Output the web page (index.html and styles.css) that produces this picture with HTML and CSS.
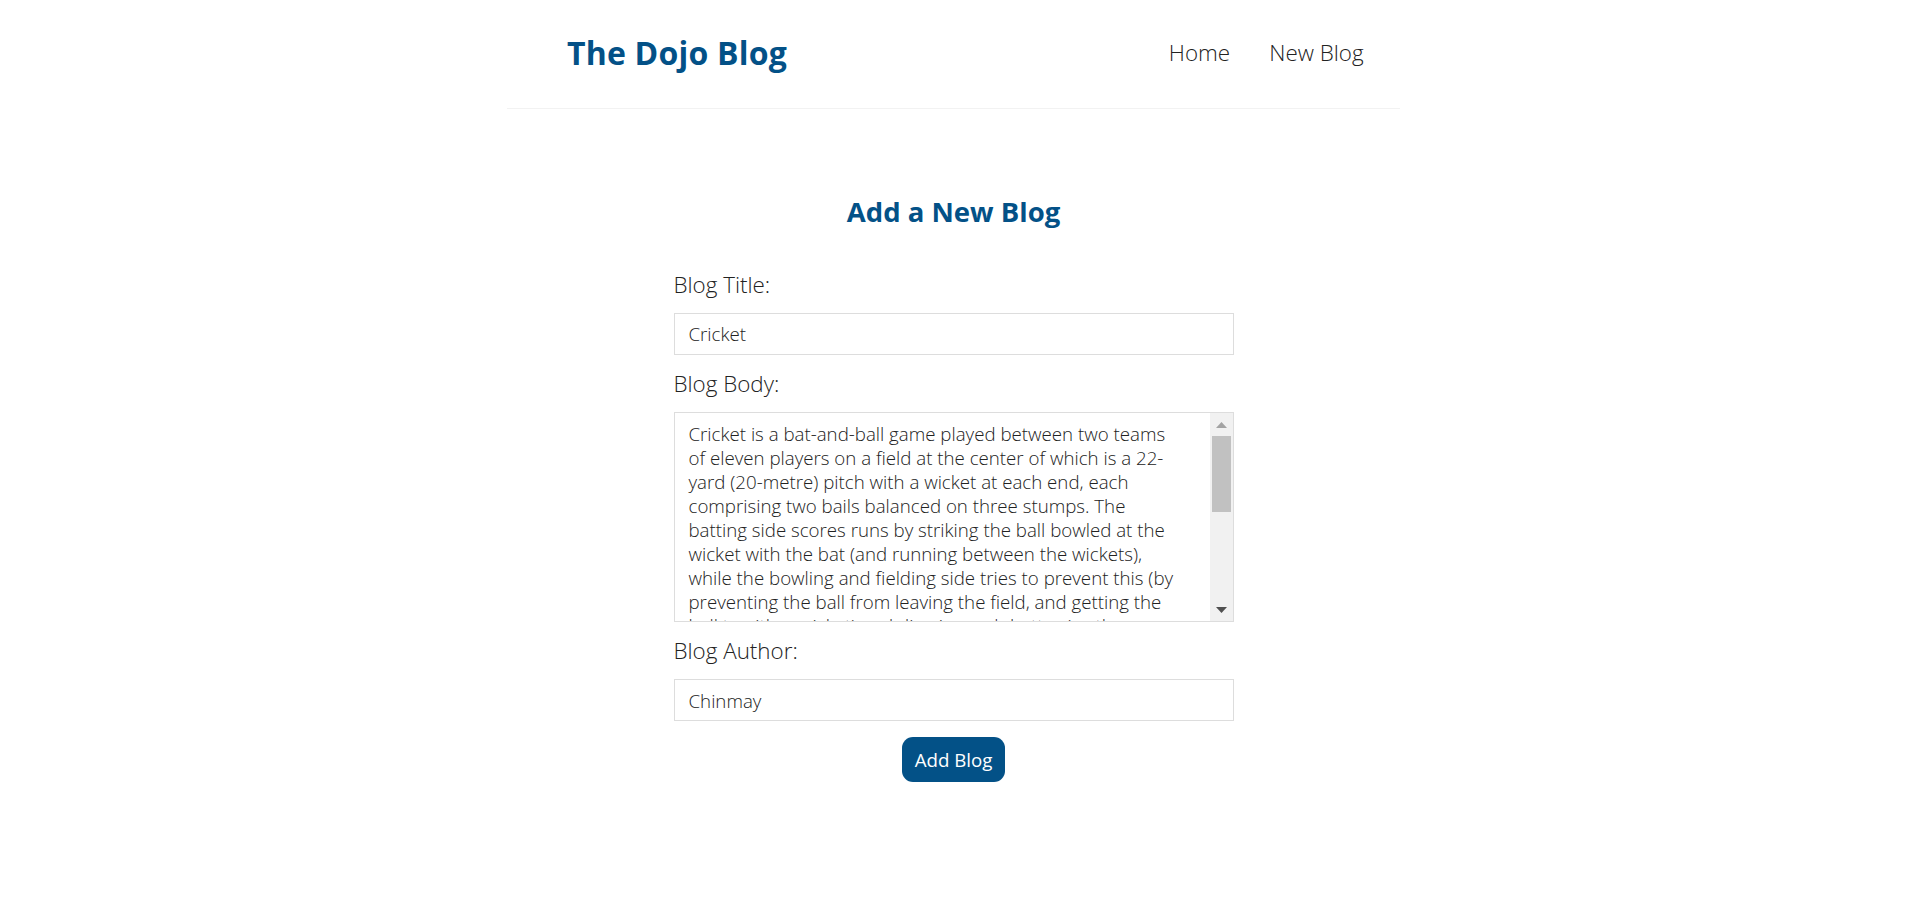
FILE: index.html
```html
<!DOCTYPE html>
<html lang="en">
<head>
<meta charset="utf-8">
<title>The Dojo Blog</title>
<link rel="stylesheet" href="styles.css">
</head>
<body>
<div class="app">
  <nav class="navbar">
    <h1>The Dojo Blog</h1>
    <div class="links">
      <a href="#">Home</a>
      <a href="#">New Blog</a>
    </div>
  </nav>
  <div class="content">
    <div class="create">
      <h2>Add a New Blog</h2>
      <form>
        <label>Blog Title:</label>
        <input type="text" value="Cricket">
        <label>Blog Body:</label>
        <div class="textarea-wrap">
          <textarea>Cricket is a bat-and-ball game played between two teams
of eleven players on a field at the center of which is a 22-
yard (20-metre) pitch with a wicket at each end, each
comprising two bails balanced on three stumps. The
batting side scores runs by striking the ball bowled at the
wicket with the bat (and running between the wickets),
while the bowling and fielding side tries to prevent this (by
preventing the ball from leaving the field, and getting the
ball to either wicket) and dismiss each batter (so they are
"out"). Means of dismissal include being bowled, when the ball hits the stumps and dislodges the bails, and by the fielding side either catching the ball after it is hit by the bat, but before it hits the ground, or hitting a wicket with the ball before a batter can cross the crease in front of the wicket. When ten batters have been dismissed, the innings ends and the teams swap roles. The game is adjudicated by two umpires, aided by a third umpire and match referee in international matches.</textarea>
          <div class="scrollbar" aria-hidden="true">
            <div class="sb-btn">
              <svg width="11" height="6" viewBox="0 0 11 6"><path d="M0 6L5.5 0L11 6Z" fill="#a3a3a3"/></svg>
            </div>
            <div class="sb-track"><div class="sb-thumb"></div></div>
            <div class="sb-btn">
              <svg width="11" height="6" viewBox="0 0 11 6"><path d="M0 0L5.5 6L11 0Z" fill="#505050"/></svg>
            </div>
          </div>
        </div>
        <label>Blog Author:</label>
        <input type="text" value="Chinmay">
        <button type="button">Add Blog</button>
      </form>
    </div>
  </div>
</div>
</body>
</html>
```
FILE: styles.css
```css
* {
  margin: 0;
  font-family: "Open Sans", "Noto Sans", sans-serif;
  color: #333;
}

body {
  background: #fff;
  padding-right: 5px;
}

.navbar {
  box-sizing: border-box;
  height: 109px;
  max-width: 893px;
  margin: 0 auto;
  padding: 23px 28px 26px 60px;
  display: flex;
  align-items: center;
  border-bottom: 1px solid #f2f2f2;
}

.navbar h1 {
  font-size: 32px;
  line-height: 40px;
  font-weight: 700;
  color: #035187;
  letter-spacing: 0.2px;
}

.navbar .links {
  margin-left: auto;
  display: flex;
  align-items: center;
}

.navbar a {
  display: block;
  margin-left: 22.4px;
  padding: 8.4px;
  font-size: 22.4px;
  line-height: 28px;
  font-weight: 350;
  text-decoration: none;
  color: #222;
}

.content {
  max-width: 840px;
  margin: 56px auto;
  padding: 28px;
}

.create {
  max-width: 560px;
  margin: 0 auto;
  text-align: center;
}

.create h2 {
  font-size: 27.5px;
  line-height: 35px;
  font-weight: 700;
  color: #035187;
  padding-top: 1px;
  margin-bottom: 41px;
}

.create label {
  display: block;
  text-align: left;
  font-size: 22.4px;
  line-height: 29px;
  font-weight: 350;
  color: #222;
}

.create input,
.create textarea {
  display: block;
  box-sizing: border-box;
  width: 100%;
  margin: 14px 0;
  padding: 8.4px 14px;
  border: 1px solid #ddd;
  border-radius: 0;
  font-size: 18.7px;
  line-height: 23.4px;
  font-weight: 350;
  color: #222;
  background: #fff;
  outline: none;
}

.textarea-wrap {
  position: relative;
  margin: 14px 0;
}

.create .textarea-wrap textarea {
  margin: 0;
  height: 210px;
  line-height: 24px;
  padding-right: 37px;
  resize: none;
  overflow: hidden;
}

.scrollbar {
  position: absolute;
  top: 1px;
  right: 1px;
  bottom: 1px;
  width: 23px;
  background: #f1f1f1;
  display: flex;
  flex-direction: column;
}

.sb-btn {
  height: 23px;
  flex: none;
  display: flex;
  align-items: center;
  justify-content: center;
}

.sb-track {
  flex: 1;
  padding: 0 2px;
}

.sb-thumb {
  height: 76px;
  background: #c1c1c1;
}

.create button {
  display: block;
  margin: 16px auto 0;
  background: #035187;
  color: #fff;
  border: 0;
  padding: 11px 13px;
  border-radius: 11px;
  font-size: 18.7px;
  line-height: 23px;
  font-weight: 400;
  cursor: pointer;
}
```
